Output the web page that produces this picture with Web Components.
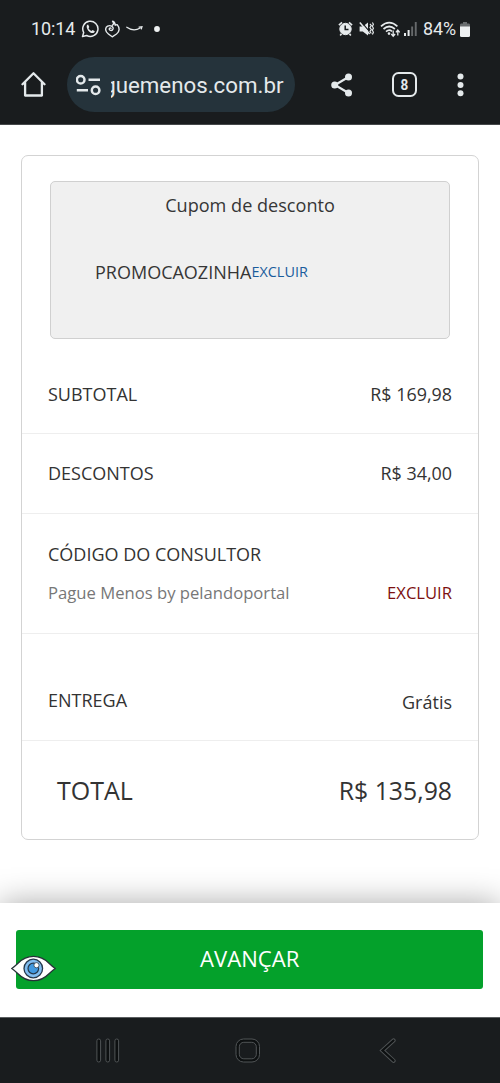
<!DOCTYPE html>
<html lang="pt-BR">
<head>
<meta charset="utf-8">
<title>Pague Menos</title>
<style>
body{margin:0;width:500px;height:1083px;overflow:hidden;background:#fff;font-family:"Open Sans",sans-serif;color:#363636}
</style>
</head>
<body>
<phone-screen></phone-screen>
<script>
function define(name, html) {
  customElements.define(name, class extends HTMLElement {
    constructor() {
      super();
      const t = document.createElement('template');
      t.innerHTML = html;
      this.attachShadow({mode: 'open'}).append(t.content.cloneNode(true));
    }
  });
}

define('status-bar', `
<style>
:host{display:flex;height:57px;box-sizing:border-box;padding:1px 30px 0 31px;align-items:center;font:18px/24px Roboto,sans-serif;color:#e6eaec}
svg{display:block;flex:none}
.time{width:45px;white-space:nowrap;letter-spacing:-.1px}
.space{flex:1}
.pct{width:33px;margin-left:6px;font-size:17.9px;letter-spacing:-.1px;white-space:nowrap}
</style>
<span class="time">10:14</span>
<svg style="margin-left:5px" width="19" height="18" viewBox="0 0 19 18" fill="none" stroke="#e6eaec" stroke-width="1.5"><path d="M1.5 16.6l1.2-4.1A7.6 7.6 0 1 1 5.7 15.5z" stroke-linejoin="round"/><path d="M6 4.9l1.1-.3 1.2 2.5-.8 1.1q1 2 3 2.8l1.1-1 2.2 1.2q0 1.3-1.4 1.8C9.400 14 4.400 8.600 6 4.900z" fill="#e6eaec" stroke="none"/></svg>
<svg style="margin-left:5px" width="15" height="18" viewBox="0 0 15 18" fill="none" stroke="#e6eaec" stroke-width="1.4" stroke-linecap="round" stroke-linejoin="round"><path d="M7.5 5.200C8.800 4.400 9 3 7.600 1.200C9.500 1.700 10 3 10.200 5.200L12.200 4.600C15 8 14.700 11.500 11.500 14L7.200 16.800L3.400 14C0 11.500-.2 7.700 2.600 6.200C5.300 4.700 8.800 6.500 8 9C7.200 11.300 3.900 10.600 4.300 8.700C4.500 7.700 5.700 7.600 6 8.400"/></svg>
<svg style="margin-left:6px" width="17" height="8" viewBox="0 0 17 8" fill="none" stroke="#e6eaec" stroke-width="1.2" stroke-linecap="round"><path d="M.8 2.200Q7.500 7 14.200 3M13 2L16 1.600L15.300 4"/></svg>
<svg style="margin-left:11px" width="6" height="6" viewBox="0 0 6 6"><circle cx="3" cy="3" r="2.900" fill="#eef1f2"/></svg>
<span class="space"></span>
<svg width="15" height="16" viewBox="0 0 15 16" fill="none" stroke="#e6eaec"><circle cx="7.500" cy="8" r="5.700" fill="#e6eaec"/><path d="M.9 4.100L4 1.300M14.100 4.100L11 1.300M3.500 12.800L2.200 14.500M11.500 12.800l1.300 1.700" stroke-width="1.600"/><path d="M7.200 4.600V8.400H10.500" stroke="#191c1e" stroke-width="1.500"/></svg>
<svg style="margin-left:6px" width="15" height="16" viewBox="0 0 15 16"><path d="M.6 5.500H3.800L9 1.500V14.500L3.800 10.500H.6z" fill="#e6eaec"/><path d="M1.500 0L11 11.200" stroke="#191c1e" stroke-width="1.200"/><path d="M.8 1.500L10.600 13" stroke="#e6eaec" stroke-width="1.500"/><path d="M11 3l1.300 1.500-1.300 2 1.300 2-1.300 2 1.300 2M13.400 1.500l1 1.800-1 2 1 2-1 2 1 2-1 2.200" fill="none" stroke="#e6eaec" stroke-width="1.200"/></svg>
<svg style="margin-left:6px" width="21" height="17" viewBox="0 0 21 17" fill="none" stroke="#e6eaec" stroke-width="1.700"><path d="M1 5.300Q9.200-2.100 17.400 5.300M3.500 8Q9.200 3 14.900 8M6 10.600Q9.200 8 12 10.300"/><circle cx="9" cy="12.600" r="1.300" fill="#e6eaec" stroke="none"/><path d="M13.200 9.500V15M11.300 13L13.200 15.300L15.100 13M17.800 14.500V9.500M15.900 11.300L17.800 9L19.700 11.300" stroke-width="1.300"/></svg>
<svg style="margin-left:3px" width="13" height="14" viewBox="0 0 13 14"><path d="M0 11h2v3H0zM3.600 8h2v6h-2z" fill="#e6eaec"/><path d="M7.200 4.500h1.900V14H7.200zM10.800 0h1.900v14h-1.900z" fill="#66696b"/></svg>
<span class="pct">84%</span>
<svg style="margin-left:4px" width="10" height="15" viewBox="0 0 10 15"><path d="M3 0h4v1.500h2Q10 1.500 10 3v2H0V3Q0 1.500 1 1.500H3z" fill="#696d6f"/><path d="M0 4.500h10V13.500Q10 15 8.500 15h-7Q0 15 0 13.500z" fill="#edf0f1"/></svg>
`);

define('browser-toolbar', `
<style>
:host{display:flex;height:68px;box-sizing:border-box;border-bottom:1px solid #45484a;padding-left:21px;align-items:flex-start;font-family:Roboto,sans-serif;color:#e4e9eb}
svg{display:block;flex:none}
.pill{display:flex;align-items:center;width:228px;height:55px;box-sizing:border-box;border-radius:28px;background:#25333b;margin-left:20.500px;padding:0 11px 0 9.500px}
.url{display:flex;justify-content:flex-end;width:173px;margin-left:9px;overflow:hidden;font-size:22.300px;line-height:30px;white-space:nowrap}
.tabs{display:flex;align-items:center;justify-content:center;width:25px;height:25px;box-sizing:border-box;border:2.500px solid #e4e9eb;border-radius:6.500px;margin:15px 0 0 39px;font-size:15px;font-weight:700;line-height:20px}
.tabs span{transform:scaleX(.9)}
</style>
<svg style="margin-top:14px" width="25" height="26" viewBox="0 0 25 26" fill="none" stroke="#e4e9eb" stroke-width="2.300" stroke-linejoin="round" stroke-linecap="round"><path d="M1.500 13.200L12.500 2.200L23.500 13.200M4.100 11.500V24.500H20.900V11.500"/></svg>
<div class="pill">
<svg width="26" height="22" viewBox="0 0 26 22" fill="none" stroke="#e4e9eb" stroke-width="2.500"><circle cx="4.700" cy="5.700" r="3.800"/><path d="M12.500 5.800H24M.8 16.300H12"/><circle cx="19.600" cy="16.300" r="3.800"/></svg>
<span class="url">guemenos.com.br</span></div>
<svg style="margin:16px 0 0 36.500px" width="22" height="24" viewBox="0 0 22 24" fill="#e4e9eb"><path d="M17.500 4L4 12L17.500 20" fill="none" stroke="#e4e9eb" stroke-width="2.200"/><circle cx="17.500" cy="4" r="3.500"/><circle cx="3.700" cy="12" r="3.500"/><circle cx="17.500" cy="20" r="3.500"/></svg>
<div class="tabs"><span>8</span></div>
<svg style="margin:16px 0 0 40px" width="7" height="24" viewBox="0 0 7 24" fill="#e4e9eb"><circle cx="3.500" cy="3.500" r="3"/><circle cx="3.500" cy="12" r="3"/><circle cx="3.500" cy="20.300" r="3"/></svg>
`);

define('coupon-box', `
<style>
:host{display:block;height:158px;box-sizing:border-box;margin:25px 28px 0;border:1px solid #d0d0d0;border-radius:5px;background:#f0f0f0}
.title{margin-top:10px;text-align:center;font-size:18.100px;line-height:26px}
.line{display:flex;align-items:center;height:26px;margin:41px 0 0 44px;white-space:nowrap}
.code{width:156.500px;font-size:18px}
.remove{color:#1a5c9c;font-size:14.400px;line-height:20px}
</style>
<div class="title"><slot name="title"></slot></div>
<div class="line"><span class="code"><slot name="code"></slot></span><span class="remove"><slot name="action"></slot></span></div>
`);

define('summary-row', `
<style>
:host{display:flex;justify-content:space-between;align-items:center;box-sizing:border-box;padding:0 26px;border-bottom:1px solid #eee;font-size:18px;line-height:26px;white-space:nowrap}
</style>
<slot></slot>
`);

define('order-summary', `
<style>
:host{display:block;margin:30px 21px 0;height:684.500px;box-sizing:border-box;border:1px solid #d3d3d3;border-radius:7px}
summary-row{color:#333}
.sub{height:95px;padding-top:15px}
.desc{height:80px;padding-bottom:1px}
.consult{height:120px;display:grid;grid-template-columns:1fr auto;align-content:start;padding-top:27px;row-gap:13px}
.consult :first-child{grid-column:1/3}
.ent{height:107px;padding-top:25px}
.total{height:98px;padding-left:35px;padding-bottom:1px;border:0;font-size:25px}
.muted{color:#777;font-size:16.650px}.red{color:#7c1010;font-size:16.600px}
.money{font-size:17.900px}.total .money{font-size:24.800px}
</style>
<coupon-box><span slot="title">Cupom de desconto</span><span slot="code">PROMOCAOZINHA</span><span slot="action">EXCLUIR</span></coupon-box>
<summary-row class="sub"><span>SUBTOTAL</span><span class="money">R$ 169,98</span></summary-row>
<summary-row class="desc"><span>DESCONTOS</span><span class="money">R$ 34,00</span></summary-row>
<summary-row class="consult"><span>CÓDIGO DO CONSULTOR</span><span class="muted">Pague Menos by pelandoportal</span><span class="red">EXCLUIR</span></summary-row>
<summary-row class="ent"><span>ENTREGA</span><span style="margin-top:4px">Grátis</span></summary-row>
<summary-row class="total"><span>TOTAL</span><span class="money">R$ 135,98</span></summary-row>
`);

define('checkout-footer', `
<style>
:host{display:block;position:relative;height:114.500px;box-sizing:border-box;padding:27.700px 17px 0 16.400px;background:#fff;box-shadow:0 0 30px rgba(0,0,0,.34)}
.btn{height:58.500px;border-radius:3px;background:#04a12b;color:#fff;display:flex;align-items:center;justify-content:center;font-size:22.100px;line-height:30px;padding-bottom:2px;box-sizing:border-box}
.eye{position:absolute;left:11px;top:52.500px}
</style>
<div class="btn"><span>AVANÇAR</span></div>
<svg class="eye" width="45" height="27" viewBox="0 0 45 27"><path d="M.8 13.500Q3 12 7 8.200C16-1 29-1 38 8.200Q42 12 44.200 13.500Q42 15 38 18.800C29 28 16 28 7 18.800Q3 15 .8 13.500z" fill="#fff" stroke="#263238" stroke-width="1.300"/><circle cx="22.300" cy="13.500" r="9.300" fill="#81bdf0" stroke="#25384b" stroke-width="1.300"/><circle cx="22.300" cy="13.500" r="5.300" fill="#4198df" stroke="#25384b" stroke-width="1.200"/><circle cx="25.500" cy="10.200" r="2.600" fill="#fff" stroke="#25384b" stroke-width=".8"/></svg>
`);

define('navigation-bar', `
<style>
:host{display:flex;position:relative;height:66.500px;box-sizing:border-box;background:#191c1e;border-top:1px solid #5b5e60;padding:20.500px 0 0 96px}
svg{display:block;flex:none}
</style>
<svg width="24" height="26" viewBox="0 0 24 26" fill="#0d1011" stroke="#505456"><rect x=".9" y="1" width="3.700" height="23" rx="1.800"/><rect x="9.900" y="1" width="3.700" height="23" rx="1.800"/><rect x="18.900" y="1" width="3.700" height="23" rx="1.800"/></svg>
<svg style="margin-left:115px" width="26" height="26" viewBox="0 0 26 26" fill="none" stroke="#505456"><rect x="1" y="1" width="23.500" height="23" rx="7.500" fill="#0d1011"/><rect x="4.300" y="4.300" width="17" height="16.500" rx="4.500" fill="#191c1e"/></svg>
<svg style="margin-left:118px" width="18" height="26" viewBox="0 0 18 26"><path d="M14.500 2.500L3.500 12.500L14.500 22.700" fill="none" stroke="#505456" stroke-width="4.200" stroke-linecap="round"/><path d="M14.500 2.500L3.500 12.500L14.500 22.700" fill="none" stroke="#0d1011" stroke-width="2.300" stroke-linecap="round"/></svg>
`);

define('phone-screen', `
<style>
:host{display:flex;flex-direction:column;width:500px;height:1083px;overflow:hidden}
header{background:#191c1e;height:125px;flex:none}
main{height:777.500px;flex:none;display:flow-root}
</style>
<header><status-bar></status-bar><browser-toolbar></browser-toolbar></header>
<main><order-summary></order-summary></main>
<checkout-footer></checkout-footer>
<navigation-bar></navigation-bar>
`);
</script>
</body>
</html>
